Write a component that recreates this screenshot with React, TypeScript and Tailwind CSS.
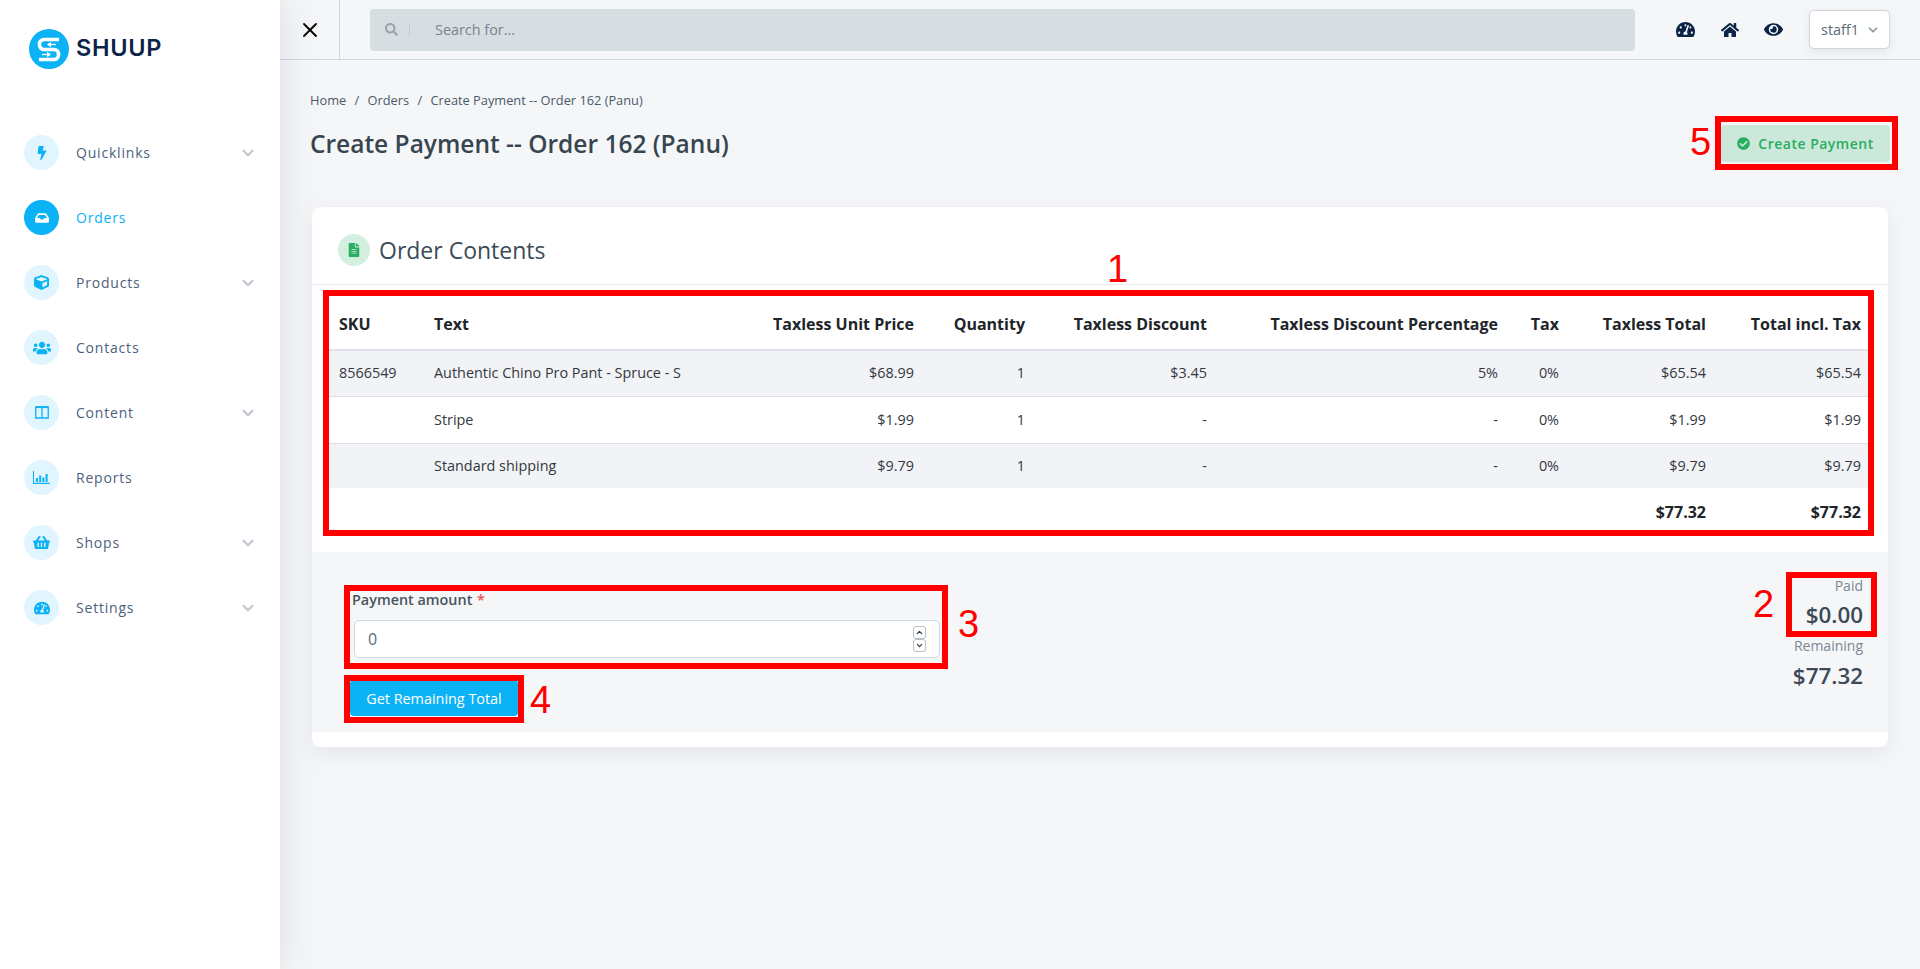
import { ChevronDown, X } from "lucide-react";
import type { ReactNode } from "react";
import {
  FaBolt,
  FaInbox,
  FaCube,
  FaUsers,
  FaShoppingBasket,
  FaTachometerAlt,
  FaHome,
  FaEye,
  FaFileAlt,
  FaCheckCircle,
  FaSearch,
} from "react-icons/fa";

function ColumnsIcon() {
  return (
    <svg width="14" height="13" viewBox="0 0 14 13" fill="none" stroke="currentColor">
      <path d="M.75 1h12.500v11H.75zM7 1v11" strokeWidth="1.300" />
      <path d="M.75 1.200h12.500" strokeWidth="1.800" />
    </svg>
  );
}

function ReportsIcon() {
  return (
    <svg width="17" height="13" viewBox="0 0 17 13" fill="currentColor">
      <path d="M0 0h1v11.800h16.500V13H0z" />
      <path d="M3 7h2v4H3zM6.200 4.500h2V11h-2zM9.400 6.500h2V11h-2zM12.600 3h2v8h-2z" />
    </svg>
  );
}

const navItems: { label: string; icon: ReactNode; chevron?: boolean; active?: boolean }[] = [
  { label: "Quicklinks", icon: <FaBolt className="text-[14px]" />, chevron: true },
  { label: "Orders", icon: <FaInbox className="text-[14px]" />, active: true },
  { label: "Products", icon: <FaCube className="text-[15px]" />, chevron: true },
  { label: "Contacts", icon: <FaUsers className="text-[18px]" /> },
  { label: "Content", icon: <ColumnsIcon />, chevron: true },
  { label: "Reports", icon: <ReportsIcon /> },
  { label: "Shops", icon: <FaShoppingBasket className="text-[17px]" />, chevron: true },
  { label: "Settings", icon: <FaTachometerAlt className="text-[16px]" />, chevron: true },
];

const rows = [
  ["8566549", "Authentic Chino Pro Pant - Spruce - S", "$68.99", "1", "$3.45", "5%", "0%", "$65.54", "$65.54"],
  ["", "Stripe", "$1.99", "1", "-", "-", "0%", "$1.99", "$1.99"],
  ["", "Standard shipping", "$9.79", "1", "-", "-", "0%", "$9.79", "$9.79"],
];

const headers = [
  "SKU",
  "Text",
  "Taxless Unit Price",
  "Quantity",
  "Taxless Discount",
  "Taxless Discount Percentage",
  "Tax",
  "Taxless Total",
  "Total incl. Tax",
];

const colWidths = [
  "w-[95px]",
  "w-[300px]",
  "w-[200px]",
  "w-[111px]",
  "w-[182px]",
  "w-[291px]",
  "w-[61px]",
  "w-[147px]",
  "w-[152px]",
];

function cellAlign(i: number) {
  if (i < 2) return "text-left pl-[10px]";
  if (i === 8) return "text-right pr-[7px]";
  return "text-right pr-[10px]";
}

function Logo() {
  return (
    <div className="flex items-center gap-[7px]">
      <svg width="40" height="40" viewBox="0 0 40 40">
        <circle cx="20" cy="20" r="20" fill="#0bb2f5" />
        <path
          d="M30 10.500H15a4.500 4.500 0 0 0-4.500 4.500v1a4.500 4.500 0 0 0 4.500 4.500H25a4.500 4.500 0 0 1 4.500 4.500v1a4.500 4.500 0 0 1-4.500 4.500H10"
          fill="none"
          stroke="#fff"
          strokeWidth="3.600"
        />
        <path d="M27 15.500H19" fill="none" stroke="#fff" strokeWidth="1.300" />
        <path d="M22 12.800l-4 2.700 4 2.700z" fill="#fff" />
        <path d="M13 25.500h8" fill="none" stroke="#fff" strokeWidth="1.300" />
        <path d="M18 22.800l4 2.700-4 2.700z" fill="#fff" />
      </svg>
      <span className="-mt-[2px] font-['Inter',sans-serif] text-[23.5px] font-semibold leading-none tracking-[0.7px] text-[#0b2447]">
        SHUUP
      </span>
    </div>
  );
}

function Sidebar() {
  return (
    <aside className="relative z-10 w-[280px] shrink-0 bg-white shadow-[0_0_36px_rgba(120,135,155,0.22)]">
      <div className="pl-[29px] pt-[29px]">
        <Logo />
      </div>
      <nav className="mt-[66px] flex flex-col gap-[30px] pl-[24px] pr-[23px]">
        {navItems.map((item) => (
          <div key={item.label} className="flex h-[35px] items-center">
            <span
              className={
                item.active
                  ? "flex h-[35px] w-[35px] items-center justify-center rounded-full bg-[#0bb2f5] text-white"
                  : "flex h-[35px] w-[35px] items-center justify-center rounded-full bg-[#e1f5fe] text-[#0bb2f5]"
              }
            >
              {item.icon}
            </span>
            <span
              className={
                item.active
                  ? "ml-[17px] flex-1 text-[14px] tracking-[0.8px] text-[#0bb2f5]"
                  : "ml-[17px] flex-1 text-[14px] tracking-[0.8px] text-[#4c5f7d]"
              }
            >
              {item.label}
            </span>
            {item.chevron && <ChevronDown size={18} strokeWidth={3} className="text-[#c2c7d2]" />}
          </div>
        ))}
      </nav>
    </aside>
  );
}

function Topbar() {
  return (
    <header className="flex h-[60px] items-center border-b border-[#cfd6dc]">
      <div className="flex h-full w-[60px] items-center justify-center border-r border-[#cfd6dc]">
        <X size={24} strokeWidth={1.8} className="text-black" />
      </div>
      <div className="ml-[30px] flex h-[42px] w-[1265px] items-center rounded-[4px] bg-[#d7dee2] pl-[15px]">
        <FaSearch className="text-[13px] text-[#9aa5b1]" />
        <span className="ml-[11px] h-[13px] w-px bg-[#c3ccd2]" />
        <span className="ml-[25px] text-[14.4px] text-[#77838f]">Search for...</span>
      </div>
      <div className="ml-auto flex items-center pr-[30px]">
        <FaTachometerAlt className="text-[19px] text-[#0b2447]" />
        <FaHome className="ml-[26px] text-[18px] text-[#0b2447]" />
        <FaEye className="ml-[25px] text-[19px] text-[#0b2447]" />
        <div className="ml-[26px] flex h-[39px] w-[81px] items-center justify-center gap-[7px] rounded-[5px] border border-[#cfd6dc] bg-white pl-[2px] text-[14.4px] text-[#5c6b7a] shadow-[0_3px_8px_rgba(120,135,155,0.15)]">
          staff1
          <ChevronDown size={14} strokeWidth={3} className="text-[#8a94a6]" />
        </div>
      </div>
    </header>
  );
}

function OrderTable() {
  return (
    <table className="ml-[17px] w-[1539px] table-fixed border-collapse text-[14.4px] text-[#32383e]">
      <colgroup>
        {colWidths.map((w, i) => (
          <col key={i} className={w} />
        ))}
      </colgroup>
      <thead>
        <tr className="h-[55px] border-b-2 border-[#dee2e6]">
          {headers.map((h, i) => (
            <th key={h} className={`${cellAlign(i)} pt-[3px] text-[16px] font-bold text-[#212529]`}>
              {h}
            </th>
          ))}
        </tr>
      </thead>
      <tbody>
        {rows.map((row, r) => (
          <tr
            key={r}
            className={
              r === 0
                ? "h-[46px] border-b border-[#dee2e6] bg-[#f2f3f6]"
                : r === 1
                  ? "h-[47px] border-b border-[#dee2e6]"
                  : "h-[45px] bg-[#f2f3f6]"
            }
          >
            {row.map((cell, i) => (
              <td key={i} className={cellAlign(i)}>
                {cell}
              </td>
            ))}
          </tr>
        ))}
        <tr className="h-[41px]">
          {headers.map((h, i) => (
            <td key={h} className={`${cellAlign(i)} pt-[6px] text-[16px] font-bold text-[#212529]`}>
              {i >= 7 ? "$77.32" : ""}
            </td>
          ))}
        </tr>
      </tbody>
    </table>
  );
}

function PaymentForm() {
  return (
    <div className="flex h-[180px] justify-between bg-[#f5f6f8] pl-[40px] pr-[25px]">
      <div className="pt-[38px]">
        <div className="text-[14.4px] font-semibold leading-[20px] text-[#4a5560]">
          Payment amount <span className="ml-[1px] text-[#ef5350]">*</span>
        </div>
        <div className="ml-[2px] mt-[10px] flex h-[38px] w-[586px] items-center justify-between rounded-[5px] border border-[#cfd6dc] bg-white pl-[13px] pr-[13px]">
          <span className="text-[16px] text-[#5c6b7a]">0</span>
          <div className="flex flex-col">
            <span className="flex h-[13px] w-[13px] items-center justify-center rounded-[3px] border border-[#b9c0c8] text-[#333]">
              <ChevronDown size={9} strokeWidth={3} className="rotate-180" />
            </span>
            <span className="flex h-[13px] w-[13px] items-center justify-center rounded-[3px] border border-[#b9c0c8] text-[#333]">
              <ChevronDown size={9} strokeWidth={3} />
            </span>
          </div>
        </div>
        <button className="-ml-[2px] mt-[22px] flex h-[36px] w-[168px] items-center justify-center rounded-[4px] bg-[#0bb2f5] pt-[1px] text-[14.4px] text-white">
          Get Remaining Total
        </button>
      </div>
      <div className="pt-[24px] text-right">
        <div className="text-[14px] leading-[20px] text-[#7a8794]">Paid</div>
        <div className="mt-[3px] text-[22.4px] font-semibold leading-[32px] text-[#3c4a57]">$0.00</div>
        <div className="mt-[5px] text-[14px] leading-[20px] text-[#7a8794]">Remaining</div>
        <div className="mt-[4px] text-[22.4px] font-semibold leading-[32px] text-[#3c4a57]">$77.32</div>
      </div>
    </div>
  );
}

// red review marks drawn over the page
function Annotations() {
  return (
    <>
      <div className="absolute left-[323px] top-[290px] h-[246px] w-[1551px] border-[6px] border-[#ff0000]" />
      <div className="absolute left-[1786px] top-[572px] h-[65px] w-[91px] border-[6px] border-[#ff0000]" />
      <div className="absolute left-[344px] top-[585px] h-[84px] w-[604px] border-[6px] border-[#ff0000]" />
      <div className="absolute left-[344px] top-[675px] h-[48px] w-[180px] border-[6px] border-[#ff0000]" />
      <div className="absolute left-[1715px] top-[116px] h-[54px] w-[183px] border-[6px] border-[#ff0000]" />
      <span className="absolute left-[1107px] top-[247px] font-['Liberation_Sans',sans-serif] text-[38px] leading-[44px] text-[#ff0000]">1</span>
      <span className="absolute left-[1753px] top-[582px] font-['Liberation_Sans',sans-serif] text-[38px] leading-[44px] text-[#ff0000]">2</span>
      <span className="absolute left-[958px] top-[602px] font-['Liberation_Sans',sans-serif] text-[38px] leading-[44px] text-[#ff0000]">3</span>
      <span className="absolute left-[530px] top-[678px] font-['Liberation_Sans',sans-serif] text-[38px] leading-[44px] text-[#ff0000]">4</span>
      <span className="absolute left-[1690px] top-[120px] font-['Liberation_Sans',sans-serif] text-[38px] leading-[44px] text-[#ff0000]">5</span>
    </>
  );
}

export default function App() {
  return (
    <div className="relative flex h-[969px] overflow-hidden bg-[#f5f6f8] font-['Open_Sans',sans-serif]">
      <Sidebar />
      <main className="flex-1">
        <Topbar />
        <div className="pl-[30px] pr-[30px]">
          <div className="pt-[30px] text-[12.8px] leading-[20px] text-[#4a5a6a]">
            Home <span className="mx-[5px]">/</span> Orders <span className="mx-[5px]">/</span> Create Payment -- Order 162 (Panu)
          </div>
          <div className="mt-[5px] flex items-start justify-between">
            <h1 className="pt-[12px] text-[24.5px] font-semibold leading-[34px] text-[#36454f]">
              Create Payment -- Order 162 (Panu)
            </h1>
            <button className="mt-[10px] flex h-[37px] w-[169px] items-center justify-center gap-[8px] rounded-[4px] bg-[#cce8da] text-[14px] font-semibold tracking-[0.5px] text-[#27ae60]">
              <FaCheckCircle className="text-[13px]" />
              Create Payment
            </button>
          </div>
          <section className="ml-[2px] mt-[45px] w-[1576px] rounded-[8px] bg-white pb-[15px] shadow-[0_6px_20px_rgba(120,135,155,0.14)]">
            <div className="flex h-[78px] items-center border-b border-[#e9ecef] pl-[26px] pt-[8px]">
              <span className="flex h-[32px] w-[32px] items-center justify-center rounded-full bg-[#d2efdf] text-[#27ae60]">
                <FaFileAlt className="text-[14px]" />
              </span>
              <h2 className="ml-[9px] pt-[2px] text-[23px] leading-none text-[#3c4a57]">Order Contents</h2>
            </div>
            <div className="pt-[10px]">
              <OrderTable />
            </div>
            <div className="h-[23px]" />
            <PaymentForm />
          </section>
        </div>
      </main>
      <Annotations />
    </div>
  );
}
